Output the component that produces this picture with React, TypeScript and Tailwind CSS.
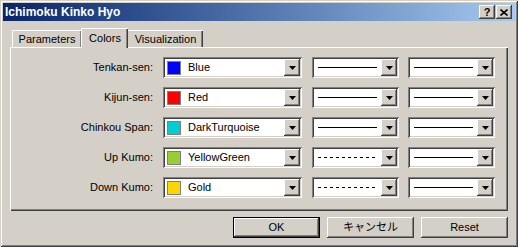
import React from 'react';

const raised =
  'shadow-[inset_-1px_-1px_#404040,inset_1px_1px_#ffffff,inset_-2px_-2px_#808080,inset_2px_2px_#d4d0c8]';
const sunken =
  'shadow-[inset_1px_1px_#808080,inset_-1px_-1px_#ffffff,inset_2px_2px_#404040,inset_-2px_-2px_#d4d0c8]';

const rows = [
  { label: 'Tenkan-sen:', name: 'Blue', color: 'bg-[#0000ff]', style: 'solid' },
  { label: 'Kijun-sen:', name: 'Red', color: 'bg-[#ff0000]', style: 'solid' },
  { label: 'Chinkou Span:', name: 'DarkTurquoise', color: 'bg-[#00ced1]', style: 'solid' },
  { label: 'Up Kumo:', name: 'YellowGreen', color: 'bg-[#9acd32]', style: 'dash' },
  { label: 'Down Kumo:', name: 'Gold', color: 'bg-[#ffd700]', style: 'dash' },
];

function DropButton() {
  return (
    <div className={`w-[16px] h-[17px] bg-[#d4d0c8] flex items-center justify-center ${raised}`}>
      <svg width="7" height="4" viewBox="0 0 7 4">
        <polygon points="0,0 7,0 3.5,4" fill="#000" />
      </svg>
    </div>
  );
}

function ColorCombo({ name, color }: { name: string; color: string }) {
  return (
    <div className={`w-[139px] h-[21px] bg-white flex items-center p-[2px] ${sunken}`}>
      <div className={`ml-[2px] w-[14px] h-[14px] border border-[#808080] ${color}`} />
      <span className="ml-[7px] flex-1 leading-none">{name}</span>
      <DropButton />
    </div>
  );
}

function LineCombo({ kind }: { kind: string }) {
  return (
    <div className={`w-[87px] h-[21px] bg-white flex items-center p-[2px] ${sunken}`}>
      <div className="flex-1 pl-[4px] pr-[4px] flex items-center">
        {kind === 'solid' ? (
          <div className="w-[59px] h-px bg-black" />
        ) : (
          <div className="w-[59px] h-px bg-[repeating-linear-gradient(90deg,#000_0px,#000_3px,transparent_3px,transparent_6px)]" />
        )}
      </div>
      <DropButton />
    </div>
  );
}

function TitleButton({ children }: { children: React.ReactNode }) {
  return (
    <div
      className={`w-[16px] h-[14px] bg-[#d4d0c8] flex items-center justify-center text-[11px] font-bold leading-none text-black ${raised}`}
    >
      {children}
    </div>
  );
}

function Button({ label, isDefault }: { label: string; isDefault?: boolean }) {
  return (
    <div
      className={`w-[87px] h-[21px] bg-[#d4d0c8] flex items-center justify-center leading-none ${
        isDefault
          ? 'shadow-[inset_0_0_0_1px_#000,inset_-2px_-2px_#404040,inset_2px_2px_#ffffff,inset_-3px_-3px_#808080]'
          : raised
      }`}
    >
      {label}
    </div>
  );
}

export default function App() {
  return (
    <div
      className={`w-[518px] h-[247px] bg-[#d4d0c8] p-[3px] flex flex-col text-[11px] text-black font-['Liberation_Sans','Noto_Sans_CJK_JP',sans-serif] shadow-[inset_1px_1px_#d4d0c8,inset_-1px_-1px_#404040,inset_2px_2px_#ffffff,inset_-2px_-2px_#808080]`}
    >
      <div className="h-[18px] bg-gradient-to-r from-[#0a246a] to-[#a6caf0] flex items-center justify-between pl-[2px] pr-[3px]">
        <span className="text-white font-bold text-[12px] leading-none">Ichimoku Kinko Hyo</span>
        <div className="flex gap-[1px]">
          <TitleButton>?</TitleButton>
          <TitleButton>
            <svg width="8" height="7" viewBox="0 0 8 7">
              <path d="M0.5 0.5 L7.5 6.5 M7.5 0.5 L0.5 6.5" stroke="#000" strokeWidth="1.6" />
            </svg>
          </TitleButton>
        </div>
      </div>

      <div className="px-[7px] pt-[7px] flex flex-col">
        <div className="h-[19px] flex items-end pl-[2px]">
          <div className="w-[69px] h-[17px] border-l border-t border-white rounded-tl-[2px] shadow-[inset_-1px_0_#808080] flex items-center justify-center leading-none">
            Parameters
          </div>
          <div className="relative z-10 w-[47px] h-[20px] -mb-px bg-[#d4d0c8] border-l border-t border-white rounded-tl-[2px] shadow-[inset_-1px_0_#404040,inset_-2px_0_#808080] flex items-start pt-[4px] justify-center leading-none">
            Colors
          </div>
          <div className="w-[75px] h-[17px] border-t border-white shadow-[inset_-1px_0_#404040,inset_-2px_0_#808080] flex items-center justify-center leading-none">
            Visualization
          </div>
        </div>

        <div className="h-[164px] pt-[10px] flex flex-col gap-[9px] shadow-[inset_1px_1px_#ffffff,inset_-1px_-1px_#404040,inset_-2px_-2px_#808080]">
          {rows.map((r) => (
            <div key={r.label} className="flex items-center h-[21px]">
              <div className="w-[143px] text-right leading-none">{r.label}</div>
              <div className="ml-[10px]">
                <ColorCombo name={r.name} color={r.color} />
              </div>
              <div className="ml-[10px]">
                <LineCombo kind={r.style} />
              </div>
              <div className="ml-[9px]">
                <LineCombo kind="solid" />
              </div>
            </div>
          ))}
        </div>

        <div className="mt-[6px] flex justify-end gap-[7px]">
          <Button label="OK" isDefault />
          <Button label="キャンセル" />
          <Button label="Reset" />
        </div>
      </div>
    </div>
  );
}
